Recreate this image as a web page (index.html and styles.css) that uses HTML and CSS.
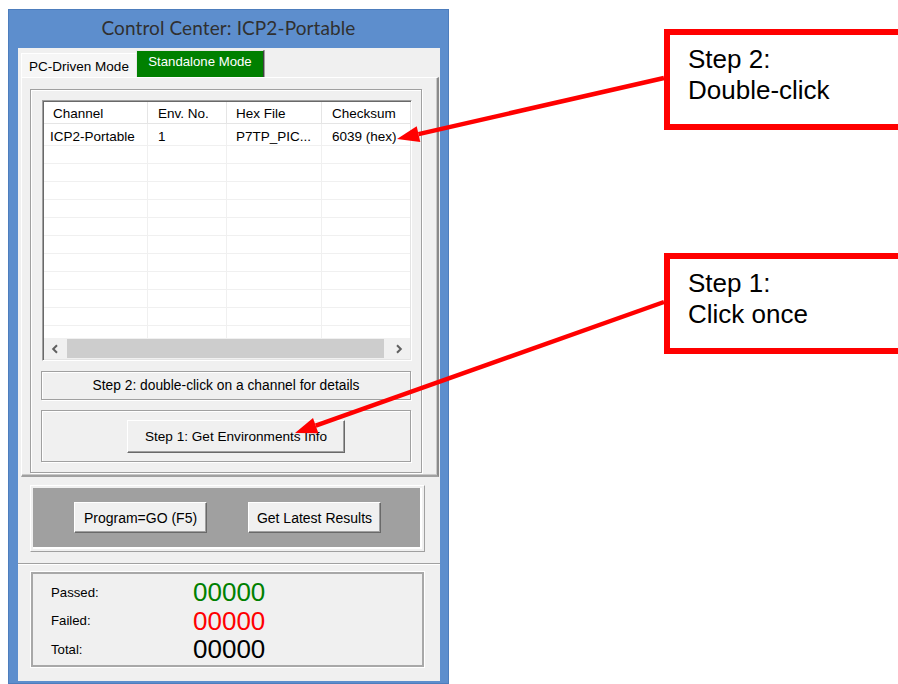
FILE: index.html
```html
<!DOCTYPE html>
<html lang="en">
<head>
<meta charset="utf-8">
<title>Control Center: ICP2-Portable</title>
<link rel="stylesheet" href="styles.css">
</head>
<body>
<div class="page">
  <div class="window">
    <div class="titlebar">Control Center: ICP2-Portable</div>
    <div class="client">
      <div class="tabs">
        <div class="tab">PC-Driven Mode</div>
        <div class="tab tab-active">Standalone Mode</div>
      </div>
      <div class="tabpanel">
        <div class="frame">
          <div class="listview">
            <div class="lv-header">
              <div class="lv-col c1">Channel</div>
              <div class="lv-col c2">Env. No.</div>
              <div class="lv-col c3">Hex File</div>
              <div class="lv-col c4">Checksum</div>
            </div>
            <div class="lv-body">
              <div class="lv-row lv-row-first">
                <div class="lv-cell c1">ICP2-Portable</div>
                <div class="lv-cell c2">1</div>
                <div class="lv-cell c3">P7TP_PIC...</div>
                <div class="lv-cell c4">6039 (hex)</div>
              </div>
              <div class="lv-row"><div class="lv-cell c1"></div><div class="lv-cell c2"></div><div class="lv-cell c3"></div><div class="lv-cell c4"></div></div>
              <div class="lv-row"><div class="lv-cell c1"></div><div class="lv-cell c2"></div><div class="lv-cell c3"></div><div class="lv-cell c4"></div></div>
              <div class="lv-row"><div class="lv-cell c1"></div><div class="lv-cell c2"></div><div class="lv-cell c3"></div><div class="lv-cell c4"></div></div>
              <div class="lv-row"><div class="lv-cell c1"></div><div class="lv-cell c2"></div><div class="lv-cell c3"></div><div class="lv-cell c4"></div></div>
              <div class="lv-row"><div class="lv-cell c1"></div><div class="lv-cell c2"></div><div class="lv-cell c3"></div><div class="lv-cell c4"></div></div>
              <div class="lv-row"><div class="lv-cell c1"></div><div class="lv-cell c2"></div><div class="lv-cell c3"></div><div class="lv-cell c4"></div></div>
              <div class="lv-row"><div class="lv-cell c1"></div><div class="lv-cell c2"></div><div class="lv-cell c3"></div><div class="lv-cell c4"></div></div>
              <div class="lv-row"><div class="lv-cell c1"></div><div class="lv-cell c2"></div><div class="lv-cell c3"></div><div class="lv-cell c4"></div></div>
              <div class="lv-row"><div class="lv-cell c1"></div><div class="lv-cell c2"></div><div class="lv-cell c3"></div><div class="lv-cell c4"></div></div>
              <div class="lv-row"><div class="lv-cell c1"></div><div class="lv-cell c2"></div><div class="lv-cell c3"></div><div class="lv-cell c4"></div></div>
              <div class="lv-row"><div class="lv-cell c1"></div><div class="lv-cell c2"></div><div class="lv-cell c3"></div><div class="lv-cell c4"></div></div>
            </div>
            <div class="hscroll">
              <span class="sb-btn">
                <svg width="8" height="10" viewBox="0 0 8 10"><path d="M6 1.2 L2.2 5 L6 8.8" fill="none" stroke="#606060" stroke-width="2"/></svg>
              </span>
              <span class="sb-track"><span class="sb-thumb"></span></span>
              <span class="sb-btn">
                <svg width="8" height="10" viewBox="0 0 8 10"><path d="M2 1.2 L5.8 5 L2 8.8" fill="none" stroke="#606060" stroke-width="2"/></svg>
              </span>
            </div>
          </div>
          <div class="hint">Step 2: double-click on a channel for details</div>
          <div class="group">
            <button class="btn btn-env" type="button">Step 1: Get Environments Info</button>
          </div>
        </div>
      </div>
      <div class="gopanel">
        <div class="gofill">
          <button class="btn btn-go" type="button">Program=GO (F5)</button>
          <button class="btn btn-go" type="button">Get Latest Results</button>
        </div>
      </div>
      <div class="status">
        <div class="counters">
          <div class="c-label">Passed:</div><div class="c-value pass">00000</div>
          <div class="c-label">Failed:</div><div class="c-value fail">00000</div>
          <div class="c-label">Total:</div><div class="c-value total">00000</div>
        </div>
      </div>
    </div>
  </div>

  <div class="notes">
    <div class="callout">Step 2:<br>Double-click</div>
    <div class="callout">Step 1:<br>Click once</div>
  </div>

  <svg class="arrows" width="898" height="684" viewBox="0 0 898 684">
    <!-- pointer from the "Double-click" note to the channel row -->
    <line x1="664" y1="78" x2="418.5" y2="134.1" stroke="#ff0000" stroke-width="4.5"/>
    <polygon points="397,139 420.3,141.9 416.7,126.3" fill="#ff0000"/>
    <!-- pointer from the "Click once" note to the environments button -->
    <line x1="664" y1="302" x2="315.7" y2="425.6" stroke="#ff0000" stroke-width="4.5"/>
    <polygon points="295,433 318.4,433.2 313.0,418.1" fill="#ff0000"/>
  </svg>
</div>
</body>
</html>
```

FILE: styles.css
```css
* { box-sizing: border-box; }

html, body {
  margin: 0;
  padding: 0;
  background: #ffffff;
}

body {
  width: 898px;
  height: 684px;
  overflow: hidden;
  font-family: "Liberation Sans", Arial, sans-serif;
  font-size: 13.5px;
  color: #000;
}

.page {
  position: relative;
  display: flex;
  align-items: flex-start;
  width: 898px;
  height: 684px;
  overflow: hidden;
}

/* ---------- dialog window ---------- */
.window {
  flex-shrink: 0;
  margin: 9px 0 0 8px;
  width: 441px;
  height: 675px;
  background: #5d8ecd;
  box-shadow: inset 0 0 0 1px #4d7dbd;
  display: flex;
  flex-direction: column;
}

.titlebar {
  height: 39px;
  padding-top: 7px;
  text-align: center;
  font-family: "Lato", "Noto Sans", sans-serif;
  font-size: 19px;
  color: #303030;
  letter-spacing: 0.1px;
}

.client {
  margin: 0 9px 0 10px;
  height: 633px;
  background: #f0f0f0;
  display: flex;
  flex-direction: column;
}

/* ---------- tabs ---------- */
.tabs {
  height: 29px;
  display: flex;
  align-items: flex-end;
  padding-left: 3px;
}

.tab {
  height: 24px;
  width: 115px;
  display: flex;
  justify-content: center;
  padding-top: 5px;
  background: #f6f6f6;
  border-top: 1px solid #ffffff;
  border-left: 1px solid #ffffff;
  white-space: nowrap;
}

.tab-active {
  height: 27px;
  width: 128px;
  padding-top: 3px;
  background: #008000;
  color: #ffffff;
  border-top: 1px solid #e8e8e8;
  border-left: 1px solid #e8e8e8;
  border-right: 1px solid #404040;
  box-shadow: 1px 0 0 #a0a0a0;
  font-size: 13.2px;
}

.tabpanel {
  margin: 0 1px 0 3px;
  height: 400px;
  padding: 11px 0 2px 8px;
  border-top: 1px solid #ffffff;
  border-left: 1px solid #ffffff;
  border-right: 2px solid #8a8a8a;
  border-bottom: 2px solid #a0a0a0;
  box-shadow: inset -1px -1px 0 #c8c8c8;
}

/* etched frame */
.frame {
  width: 392px;
  height: 384px;
  padding: 10px 9px 10px 11px;
  border: 1px solid #a0a0a0;
  box-shadow: inset 1px 1px 0 #ffffff, 1px 1px 0 #ffffff;
}

/* ---------- list view ---------- */
.listview {
  width: 370px;
  height: 261px;
  background: #ffffff;
  border: 1px solid #a0a0a0;
  border-right-color: #ffffff;
  border-bottom-color: #ffffff;
  box-shadow: inset 1px 1px 0 #696969, inset -1px -1px 0 #e3e3e3;
  padding: 1px;
  display: flex;
  flex-direction: column;
}

.lv-header {
  display: flex;
  height: 22px;
  border-bottom: 1px solid #e5e5e5;
}

.lv-col {
  display: flex;
  align-items: center;
  padding-left: 9px;
  padding-top: 2px;
  border-right: 1px solid #e5e5e5;
  white-space: nowrap;
  overflow: hidden;
}

.c1 { width: 104px; flex-shrink: 0; }
.c2 { width: 79px; flex-shrink: 0; }
.c3 { width: 95px; flex-shrink: 0; }
.c4 { flex: 1; border-right: none; }

.lv-col.c2, .lv-col.c4 { padding-left: 10px; }

.lv-body {
  height: 214px;
  overflow: hidden;
}

.lv-row {
  display: flex;
  height: 18px;
  border-bottom: 1px solid #f0f0f0;
}

.lv-row-first {
  height: 22px;
}

.lv-cell {
  display: flex;
  align-items: center;
  padding-left: 10px;
  padding-top: 4px;
  border-right: 1px solid #f0f0f0;
  white-space: nowrap;
  overflow: hidden;
}

.lv-cell.c1 { padding-left: 6px; }
.lv-cell.c3 { padding-left: 9px; }
.lv-cell.c4 { border-right: none; }

.hscroll {
  display: flex;
  height: 21px;
  background: #f0f0f0;
  padding: 1px 0;
}

.sb-btn {
  width: 22px;
  flex-shrink: 0;
  display: flex;
  align-items: center;
  justify-content: center;
}

.sb-track {
  flex: 1;
  display: flex;
  padding-right: 4px;
}

.sb-thumb {
  flex: 1;
  margin-left: 1px;
  background: #cdcdcd;
}

/* ---------- hint and step-1 group ---------- */
.hint {
  margin: 10px 0 0 -1px;
  width: 370px;
  height: 29px;
  display: flex;
  align-items: center;
  justify-content: center;
  border: 1px solid #a0a0a0;
  box-shadow: inset 1px 1px 0 #ffffff, 1px 1px 0 #ffffff;
  font-size: 13.8px;
}

.group {
  margin: 10px 0 0 -1px;
  width: 370px;
  height: 52px;
  padding: 9px 0 0 85px;
  border: 1px solid #a0a0a0;
  box-shadow: inset 1px 1px 0 #ffffff, 1px 1px 0 #ffffff;
}

/* ---------- buttons ---------- */
.btn {
  font-family: "Liberation Sans", Arial, sans-serif;
  font-size: 13.6px;
  color: #000;
  background: #f0f0f0;
  border: 1px solid;
  border-color: #ffffff #696969 #696969 #ffffff;
  box-shadow: inset -1px -1px 0 #a0a0a0;
  padding: 0;
  margin: 0;
  display: flex;
  align-items: center;
  justify-content: center;
  white-space: nowrap;
}

.btn-env {
  width: 218px;
  height: 33px;
}

/* ---------- program panel ---------- */
.gopanel {
  margin: 8px 0 0 12px;
  width: 395px;
  height: 67px;
  padding: 2px;
  border: 1px solid;
  border-color: #ffffff #a0a0a0 #a0a0a0 #ffffff;
}

.gofill {
  height: 100%;
  background: #a0a0a0;
  box-shadow: inset -2px -2px 0 #ffffff;
  display: flex;
  align-items: flex-start;
  gap: 41px;
  padding: 14px 0 0 41px;
}

.btn-go {
  width: 133px;
  height: 31px;
  font-size: 14px;
}

/* ---------- result counters ---------- */
.status {
  margin-top: 11px;
  flex: 1;
  border-top: 1px solid #a0a0a0;
  box-shadow: inset 0 1px 0 #ffffff;
  padding: 8px 0 0 13px;
}

.counters {
  width: 393px;
  height: 95px;
  border: 2px solid #a8a8a8;
  box-shadow: 0 0 0 1px #ffffff;
  display: grid;
  grid-template-columns: 142px auto;
  grid-auto-rows: 28.5px;
  align-items: center;
  padding: 4px 0 0 18px;
}

.c-label {
  font-size: 13.2px;
}

.c-value {
  font-size: 26px;
  line-height: 28px;
  justify-self: start;
}

.pass { color: #008000; }
.fail { color: #ff0000; }
.total { color: #000000; }

/* ---------- annotations ---------- */
.notes {
  flex-shrink: 0;
  margin-left: 215px;
  padding-top: 29px;
  display: flex;
  flex-direction: column;
  gap: 123px;
}

.callout {
  width: 260px;
  height: 101px;
  border: 6px solid #ff0000;
  background: #ffffff;
  padding: 9px 0 0 18px;
  font-family: "Liberation Sans", Arial, sans-serif;
  font-size: 26px;
  line-height: 31px;
  color: #000;
}

.arrows {
  position: absolute;
  left: 0;
  top: 0;
  pointer-events: none;
}
```
